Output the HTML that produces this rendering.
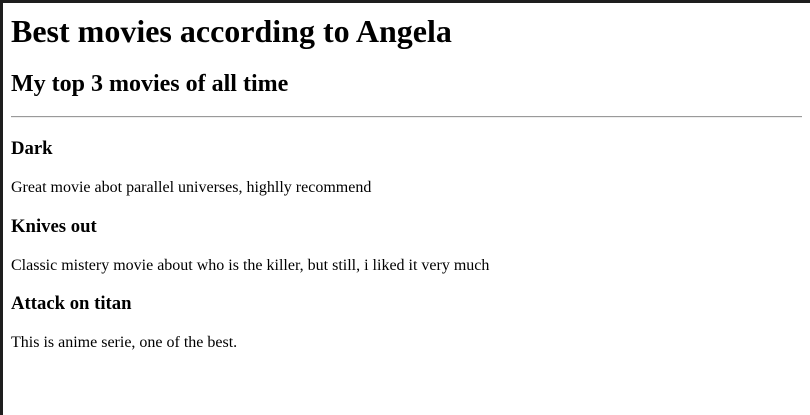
<!DOCTYPE html>
<html><head><meta charset="utf-8"><style>
html,body{margin:0;padding:0;background:#fff}
body{width:810px;height:415px;position:relative;overflow:hidden;font-family:"Liberation Serif",serif;color:#000}
.frame{position:absolute;left:0;top:0;width:810px;height:3px;background:#1e1e1e}
.frame2{position:absolute;left:0;top:0;width:3px;height:415px;background:#1e1e1e}
.t{position:absolute;left:11px;margin:0;line-height:1;white-space:nowrap}
h1.t{font-size:32px;font-weight:bold}
h2.t{font-size:24px;font-weight:bold}
h3.t{font-size:18.72px;font-weight:bold}
p.t{font-size:16px}
.hr{position:absolute;left:11px;width:791px;top:116px;height:0;border-top:1px solid #9a9a9a;border-bottom:1px solid #eee}
</style></head><body>
<div class="frame"></div><div class="frame2"></div>
<h1 class="t" style="top:15px">Best movies according to Angela</h1>
<h2 class="t" style="top:72px">My top 3 movies of all time</h2>
<div class="hr"></div>
<h3 class="t" style="top:140px">Dark</h3>
<p class="t" style="top:180px">Great movie abot parallel universes, highlly recommend</p>
<h3 class="t" style="top:218px">Knives out</h3>
<p class="t" style="top:258px">Classic mistery movie about who is the killer, but still, i liked it very much</p>
<h3 class="t" style="top:295px">Attack on titan</h3>
<p class="t" style="top:335px">This is anime serie, one of the best.</p>
</body></html>
